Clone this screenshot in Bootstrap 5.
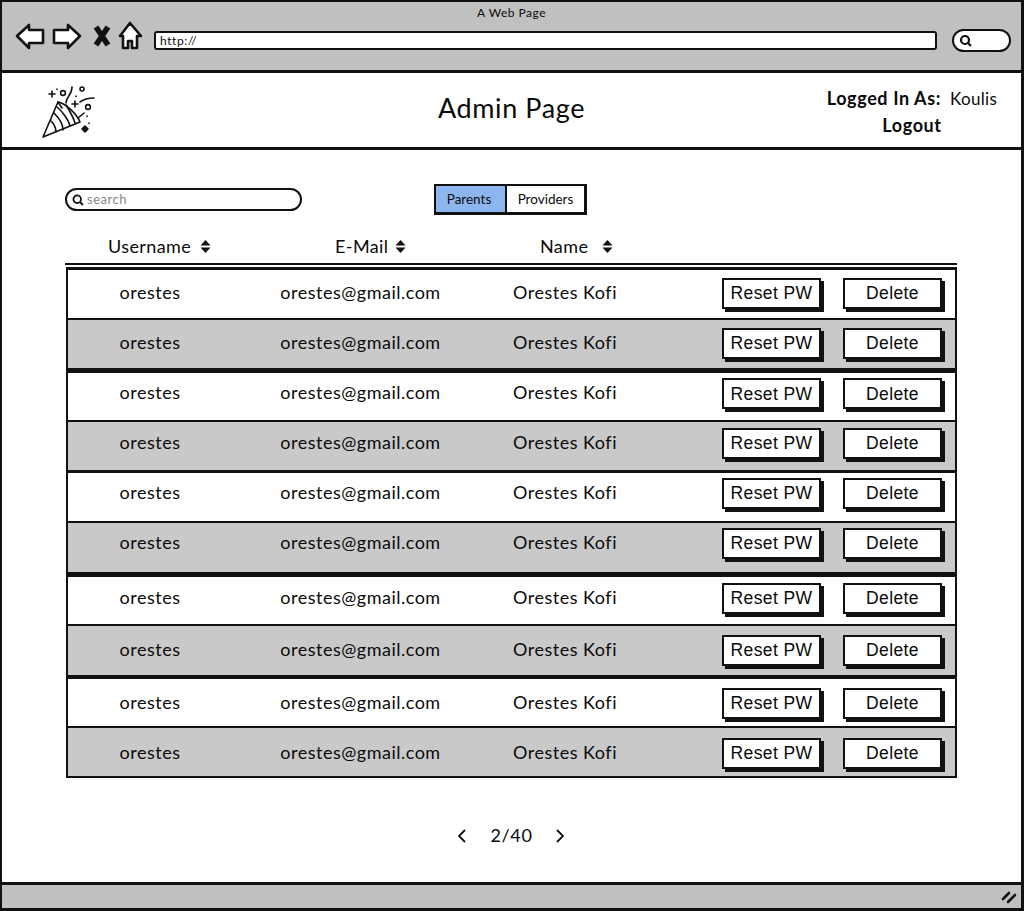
<!DOCTYPE html>
<html lang="en">
<head>
    <meta charset="UTF-8">
    <title>Admin Page</title>
    <link href="https://cdn.jsdelivr.net/npm/bootstrap@5.3.3/dist/css/bootstrap.min.css" rel="stylesheet">
    <script src="https://cdn.jsdelivr.net/npm/bootstrap@5.3.3/dist/js/bootstrap.bundle.min.js"></script>
    <style>
        body { margin: 0; background: #fff; color: #0a0a0a; font-family: "Lato", "Noto Sans", sans-serif; }
        .wire-frame { width: 1024px; height: 911px; border: 2px solid #111; border-width: 2px 3px 3px 2px; }
        .browser-bar { height: 71px; background: #c0c0c0; border-bottom: 3px solid #111; padding: 0 12px; }
        .browser-title { font-size: 12px; line-height: 14px; padding-top: 4px; letter-spacing: .5px; }
        .browser-tools { height: 36px; margin-top: 2px; }
        .browser-tools > svg { margin-bottom: 8px; flex-shrink: 0; }
        .url-box { width: 783px; height: 19px; margin-left: 10px; margin-right: 15px; flex-shrink: 0; background: #fff; border: 2px solid #111; border-radius: 3px; font-size: 12px; line-height: 15px; padding-left: 4px; letter-spacing: .6px; }
        .url-search { width: 59px; height: 23px; flex-shrink: 0; background: #fff; border: 2px solid #111; border-radius: 12px; padding-left: 5px; }
        .page-head { height: 77px; border-bottom: 3px solid #111; }
        .logo-cell { left: 40px; top: 12px; line-height: 0; }
        .page-title { font-size: 27px; line-height: 34px; letter-spacing: .6px; padding-bottom: 4px; }
        .user-box { right: 23px; top: 12px; width: 172px; font-size: 18px; line-height: 26px; letter-spacing: .6px; }
        .user-box b { font-weight: 700; }
        .user-name { margin-left: 9px; font-size: 17px; letter-spacing: .35px; }
        .page-body { padding: 0 65px 0 63px; }
        .tool-row { height: 34px; margin-top: 34px; padding-top: 4px; }
        .search-field { width: 237px; height: 23px; border: 2px solid #111; border-radius: 12px; padding-left: 5px; color: #888; font-size: 13px; letter-spacing: .5px; }
        .search-field svg { margin-right: 3px; }
        .tab-group { left: 369px; top: 0; width: 153px; height: 31px; border: 2px solid #111; border-width: 2px 3px 3px 2px; font-size: 13.5px; }
        .tab-on { width: 71px; padding-right: 3px; background: #8db6ef; border-right: 2px solid #111; }
        .tab-off { flex: 1; background: #fff; }
        .col-head { height: 45px; padding-top: 11px; font-size: 18px; letter-spacing: .4px; }
        .col-head svg { margin-left: 7px; }
        .head-user { margin-left: 43px; width: 227px; }
        .head-user svg { margin-left: 9px; }
        .head-mail { width: 205px; }
        .col-head .head-name svg { margin-left: 14px; }
        .rule-line { height: 4px; border-top: 2px solid #111; width: 892px; }
        .grid-list { width: 891px; margin-left: 1px; border: 2px solid #111; border-top-width: 3px; }
        .grid-row { height: 50px; font-size: 18px; letter-spacing: .5px; border-bottom: 2px solid #111; }
        .grid-row:nth-child(even) { background: #c9c9c9; }
        /* hand drawn mock: rows are not quite even, text sits a bit off centre */
        .grid-row:nth-child(1) { padding-bottom: 2px; }
        .grid-row:nth-child(2) { height: 53px; border-bottom-width: 5px; padding-bottom: 2px; }
        .grid-row:nth-child(3) { height: 49px; padding-bottom: 6px; }
        .grid-row:nth-child(4) { height: 51px; border-bottom-width: 3px; padding-bottom: 6px; }
        .grid-row:nth-child(5) { padding-bottom: 8px; }
        .grid-row:nth-child(6) { height: 54px; border-bottom-width: 5px; padding-bottom: 9px; }
        .grid-row:nth-child(7) { height: 49px; padding-bottom: 5px; }
        .grid-row:nth-child(8) { height: 53px; border-bottom-width: 4px; padding-bottom: 1px; }
        .grid-row:nth-child(9) { height: 49px; padding-top: 1px; }
        .grid-row:nth-child(10) { height: 48px; border-bottom: 0; padding-top: 2px; }
        .cell-user { width: 164px; padding-bottom: 2px; text-align: center; }
        .cell-mail { width: 257px; padding-bottom: 2px; text-align: center; }
        .cell-name { width: 152px; padding-bottom: 2px; text-align: center; }
        .wire-btn { width: 99px; height: 31px; padding: 0; background: #fff; color: #0a0a0a; border: 2px solid #111; border-radius: 0; box-shadow: 3px 3px 0 #111; font-family: "Liberation Sans", sans-serif; font-size: 17.5px; line-height: 26px; letter-spacing: .4px; }
        .wire-btn + .wire-btn { margin-left: 22px; }
        .btn-cell { margin-left: 81px; }
        .pager-row { margin-top: 44px; font-size: 18px; letter-spacing: .6px; }
        .pager-num { width: 70px; text-align: center; margin: 0 9px; padding-left: 2px; }
        .status-bar { height: 26px; margin-top: auto; background: #c0c0c0; border-top: 3px solid #111; }
        .grip-icon { right: 4px; top: 5px; }
    </style>
</head>
<body>

<div class="wire-frame d-flex flex-column position-relative">

    <div class="browser-bar">
        <div class="browser-title text-center">A Web Page</div>
        <div class="browser-tools d-flex align-items-center">
            <svg width="130" height="36" viewBox="0 0 130 36" fill="#fff" stroke="#111" stroke-width="2.6" stroke-linejoin="round">
                <path d="M3 18 L15 7 L15 12 L29 12 L29 25 L15 25 L15 30 Z"/>
                <path d="M66 18 L54 7 L54 12 L40 12 L40 25 L54 25 L54 30 Z"/>
                <path d="M82 9 L94 27 M94 9 L82 27" stroke-width="5.5" fill="none" stroke-linecap="butt"/>
                <path d="M116 5 L127 18 L123 18 L123 30 L118 30 L118 23 L114 23 L114 30 L109 30 L109 18 L106 18 Z"/>
            </svg>
            <div class="url-box">http://</div>
            <div class="url-search d-flex align-items-center">
                <svg width="13" height="13" viewBox="0 0 13 13" fill="none" stroke="#111" stroke-width="2.2"><circle cx="6" cy="6" r="4"/><path d="M9 9 L12 12"/></svg>
            </div>
        </div>
    </div>

    <div class="page-head position-relative d-flex align-items-center justify-content-center">
        <div class="logo-cell position-absolute">
            <svg width="56" height="56" viewBox="0 0 56 56" fill="none" stroke="#111" stroke-width="1.6" stroke-linecap="round" stroke-linejoin="round">
                <path d="M1 52 L16 17 C23 18 35 29 38 37 Z" fill="#fff"/>
                <path d="M16 17 L20 23 M9 36 C12 39 14 43 14 47 M12 28 C17 33 21 40 21 45 M15 22 C21 27 27 36 28 41 M24 20 C27 25 31 31 33 38 M36 33 L42 28" />
                <path d="M24 18 C24 12 30 10 30 2 M38 17 C42 14 47 13 52 13"/>
                <circle cx="21" cy="8" r="2.4"/><circle cx="40" cy="4" r="2"/><circle cx="46" cy="22" r="2.4"/>
                <path d="M7 9 H13 M10 6 V12 M30 19 H36 M33 16 V22"/>
                <path d="M43 41 L46 44 L43 47 L40 44 Z" fill="#111"/>
                <path d="M45 31 V31.5 M47 38 V38.5 M34 11 V11.5 M15 4 V4.5"/>
            </svg>
        </div>
        <div class="page-title">Admin Page</div>
        <div class="user-box position-absolute text-center">
            <div class="text-nowrap"><b>Logged In As:</b><span class="user-name">Koulis</span></div>
            <div><b>Logout</b></div>
        </div>
    </div>

    <div class="page-body">
        <div class="tool-row position-relative">
            <div class="search-field d-flex align-items-center">
                <svg width="12" height="12" viewBox="0 0 12 12" fill="none" stroke="#111" stroke-width="1.8"><circle cx="5.2" cy="5.2" r="3.8"/><path d="M8 8 L11 11"/></svg>
                search
            </div>
            <div class="tab-group position-absolute d-flex">
                <div class="tab-on d-flex align-items-center justify-content-center">Parents</div>
                <div class="tab-off d-flex align-items-center justify-content-center">Providers</div>
            </div>
        </div>

        <div class="col-head d-flex align-items-center">
            <div class="head-user d-flex align-items-center">Username
                <svg width="11" height="15" viewBox="0 0 11 15" fill="#111"><path d="M5.5 1 L10.5 6.5 H0.5 Z M0.5 8.5 H10.5 L5.5 14 Z"/></svg>
            </div>
            <div class="head-mail d-flex align-items-center">E-Mail
                <svg width="11" height="15" viewBox="0 0 11 15" fill="#111"><path d="M5.5 1 L10.5 6.5 H0.5 Z M0.5 8.5 H10.5 L5.5 14 Z"/></svg>
            </div>
            <div class="head-name d-flex align-items-center">Name
                <svg width="11" height="15" viewBox="0 0 11 15" fill="#111"><path d="M5.5 1 L10.5 6.5 H0.5 Z M0.5 8.5 H10.5 L5.5 14 Z"/></svg>
            </div>
        </div>
        <div class="rule-line"></div>

        <div class="grid-list">
            <div class="grid-row d-flex align-items-center"><div class="cell-user">orestes</div><div class="cell-mail">orestes@gmail.com</div><div class="cell-name">Orestes Kofi</div><div class="btn-cell d-flex"><button class="btn wire-btn">Reset PW</button><button class="btn wire-btn">Delete</button></div></div>
            <div class="grid-row d-flex align-items-center"><div class="cell-user">orestes</div><div class="cell-mail">orestes@gmail.com</div><div class="cell-name">Orestes Kofi</div><div class="btn-cell d-flex"><button class="btn wire-btn">Reset PW</button><button class="btn wire-btn">Delete</button></div></div>
            <div class="grid-row d-flex align-items-center"><div class="cell-user">orestes</div><div class="cell-mail">orestes@gmail.com</div><div class="cell-name">Orestes Kofi</div><div class="btn-cell d-flex"><button class="btn wire-btn">Reset PW</button><button class="btn wire-btn">Delete</button></div></div>
            <div class="grid-row d-flex align-items-center"><div class="cell-user">orestes</div><div class="cell-mail">orestes@gmail.com</div><div class="cell-name">Orestes Kofi</div><div class="btn-cell d-flex"><button class="btn wire-btn">Reset PW</button><button class="btn wire-btn">Delete</button></div></div>
            <div class="grid-row d-flex align-items-center"><div class="cell-user">orestes</div><div class="cell-mail">orestes@gmail.com</div><div class="cell-name">Orestes Kofi</div><div class="btn-cell d-flex"><button class="btn wire-btn">Reset PW</button><button class="btn wire-btn">Delete</button></div></div>
            <div class="grid-row d-flex align-items-center"><div class="cell-user">orestes</div><div class="cell-mail">orestes@gmail.com</div><div class="cell-name">Orestes Kofi</div><div class="btn-cell d-flex"><button class="btn wire-btn">Reset PW</button><button class="btn wire-btn">Delete</button></div></div>
            <div class="grid-row d-flex align-items-center"><div class="cell-user">orestes</div><div class="cell-mail">orestes@gmail.com</div><div class="cell-name">Orestes Kofi</div><div class="btn-cell d-flex"><button class="btn wire-btn">Reset PW</button><button class="btn wire-btn">Delete</button></div></div>
            <div class="grid-row d-flex align-items-center"><div class="cell-user">orestes</div><div class="cell-mail">orestes@gmail.com</div><div class="cell-name">Orestes Kofi</div><div class="btn-cell d-flex"><button class="btn wire-btn">Reset PW</button><button class="btn wire-btn">Delete</button></div></div>
            <div class="grid-row d-flex align-items-center"><div class="cell-user">orestes</div><div class="cell-mail">orestes@gmail.com</div><div class="cell-name">Orestes Kofi</div><div class="btn-cell d-flex"><button class="btn wire-btn">Reset PW</button><button class="btn wire-btn">Delete</button></div></div>
            <div class="grid-row d-flex align-items-center"><div class="cell-user">orestes</div><div class="cell-mail">orestes@gmail.com</div><div class="cell-name">Orestes Kofi</div><div class="btn-cell d-flex"><button class="btn wire-btn">Reset PW</button><button class="btn wire-btn">Delete</button></div></div>
        </div>

        <div class="pager-row d-flex align-items-center justify-content-center">
            <svg width="10" height="16" viewBox="0 0 10 16" fill="none" stroke="#111" stroke-width="1.8"><path d="M8 2 L2 8 L8 14"/></svg>
            <div class="pager-num">2/40</div>
            <svg width="10" height="16" viewBox="0 0 10 16" fill="none" stroke="#111" stroke-width="1.8"><path d="M2 2 L8 8 L2 14"/></svg>
        </div>
    </div>

    <div class="status-bar position-relative">
        <svg class="grip-icon position-absolute" width="16" height="14" viewBox="0 0 16 14" stroke="#111" stroke-width="2.6" stroke-linecap="round"><path d="M2 9 L8 3 M7 12 L14 5"/></svg>
    </div>
</div>

</body>
</html>
